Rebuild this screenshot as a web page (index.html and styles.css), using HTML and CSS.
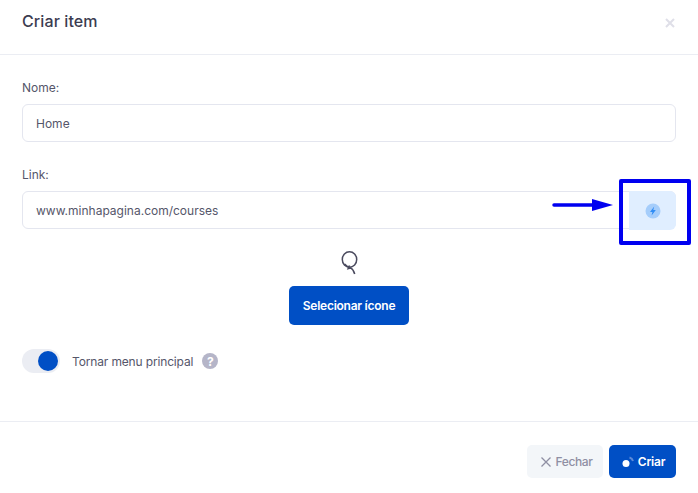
FILE: index.html
```html
<!DOCTYPE html>
<html lang="pt">
<head>
<meta charset="utf-8">
<title>Criar item</title>
<link rel="stylesheet" href="styles.css">
</head>
<body>
<div class="modal">
  <header class="head">
    <h1 class="title">Criar item</h1>
    <svg class="close" width="10" height="10" viewBox="0 0 10 10"><path d="M1 1l8 8M9 1l-8 8" stroke="#dfdfe8" stroke-width="2"/></svg>
  </header>
  <main class="body">
    <div class="field">
      <label class="label">Nome:</label>
      <div class="input">Home</div>
    </div>
    <div class="field link">
      <label class="label">Link:</label>
      <div class="input input-group">
        <span class="value">www.minhapagina.com/courses</span>
        <span class="addon">
          <svg width="16" height="16" viewBox="0 0 16 16"><circle cx="8" cy="8" r="7.5" fill="#a5cdfb"/><path d="M9.200 3.600L5 8.900h2.400l-.8 3.500 4.200-5.400H8.300z" fill="#2f8cf5"/></svg>
        </span>
      </div>
    </div>
    <div class="picker">
      <svg class="balloon" width="20" height="24" viewBox="0 0 20 24" fill="none" stroke="#4a4a5e"><ellipse cx="10.500" cy="8.500" rx="7.200" ry="7.700" stroke-width="1.500"/><path d="M5.500 13c1.800 1.800 3.500 3 5 3.500M10.500 14.500l-1.300 3 2.500-.6c1.500.8 3 2.800 4 6" stroke-width="1.600"/></svg>
      <button class="btn btn-primary select">Selecionar ícone</button>
    </div>
    <div class="switch-row">
      <span class="switch"><span class="knob"></span></span>
      <span class="switch-label">Tornar menu principal</span>
      <span class="help">?</span>
    </div>
  </main>
  <footer class="foot">
    <button class="btn btn-light"><svg width="10" height="10" viewBox="0 0 10 10"><path d="M.5.5l9 9M9.500.5l-9 9" stroke="#8f8fa3" stroke-width="1.300"/></svg><span>Fechar</span></button>
    <button class="btn btn-primary create"><svg width="13" height="13" viewBox="0 0 13 13"><circle cx="4" cy="8.500" r="3.500" fill="#fff"/><path d="M7.500 2.500A5 5 0 0 1 11 6" fill="none" stroke="#5c8ad8" stroke-width="2"/></svg><span>Criar</span></button>
  </footer>
</div>
<div class="mark"></div>
<svg class="arrow" width="62" height="16" viewBox="0 0 62 16"><path d="M2 8h40" stroke="#0000f0" stroke-width="3.500" stroke-linecap="round"/><path d="M40 2l21 6-21 6z" fill="#0000f0"/></svg>
</body>
</html>
```
FILE: styles.css
```css
* { box-sizing: border-box; }
html, body { margin: 0; height: 100%; }
body { background: #fff; font-family: Inter, "Open Sans", sans-serif; color: #3f4254; position: relative; overflow: hidden; }
.modal { width: 698px; height: 493px; display: flex; flex-direction: column; }
.head { height: 55px; flex: none; border-bottom: 1px solid #ebedf3; display: flex; justify-content: space-between; padding: 12px 22px 0; }
.title { margin: 0; font-size: 16px; line-height: 18px; font-weight: 500; letter-spacing: .1px; color: #3c3c50; }
.close { margin: 6px 1px 0 0; }
.body { flex: 1; padding: 25px 22px 0; }
.field { display: flex; flex-direction: column; }
.link { margin-top: 25px; }
.label { font-size: 12px; line-height: 15px; margin-bottom: 9px; color: #55566a; }
.input { height: 38px; border: 1px solid #e4e6ef; border-radius: 6px; padding: 0 13px; font-size: 12px; color: #55566a; display: flex; align-items: center; }
.input-group { padding-right: 0; justify-content: space-between; align-items: stretch; }
.value { align-self: center; }
.addon { width: 47px; margin: -1px -1px -2px 0; background: #e0eeff; border-radius: 0 6px 6px 0; display: flex; align-items: center; justify-content: center; }
.picker { display: flex; flex-direction: column; align-items: center; margin-top: 22px; }
.balloon { display: block; margin-bottom: 11px; }
.btn { border: 0; border-radius: 5px; font-family: inherit; font-size: 12px; font-weight: 600; display: inline-flex; align-items: center; justify-content: center; padding: 0; }
.btn-primary { background: #004fc5; color: #fff; }
.select { width: 120px; height: 39px; letter-spacing: -.25px; }
.switch-row { display: flex; align-items: center; margin-top: 24px; }
.switch { width: 38px; height: 24px; background: #ebedf3; border-radius: 12px; display: flex; justify-content: flex-end; align-items: center; padding-right: 2px; }
.knob { width: 20px; height: 20px; border-radius: 50%; background: #004fc5; }
.switch-label { margin-left: 12px; font-size: 12px; letter-spacing: -.15px; color: #55566a; }
.help { margin-left: 9px; width: 16px; height: 16px; border-radius: 50%; background: #b5b5c8; color: #fff; font-size: 12px; font-weight: 700; display: flex; align-items: center; justify-content: center; }
.foot { flex: none; height: 72px; border-top: 1px solid #ebedf3; display: flex; justify-content: flex-end; gap: 6px; padding: 23px 22px 0; }
.foot .btn { height: 33px; }
.btn-light { width: 76px; padding-left: 3px; background: #f3f6f9; color: #8f8fa3; font-weight: 500; gap: 5px; letter-spacing: -.4px; }
.create { width: 67px; padding-left: 2px; gap: 3px; letter-spacing: -.2px; }
.mark { position: absolute; left: 619px; top: 179px; width: 72px; height: 66px; border: 4px solid #0000f0; border-radius: 2px; }
.arrow { position: absolute; left: 552px; top: 197px; }
```
